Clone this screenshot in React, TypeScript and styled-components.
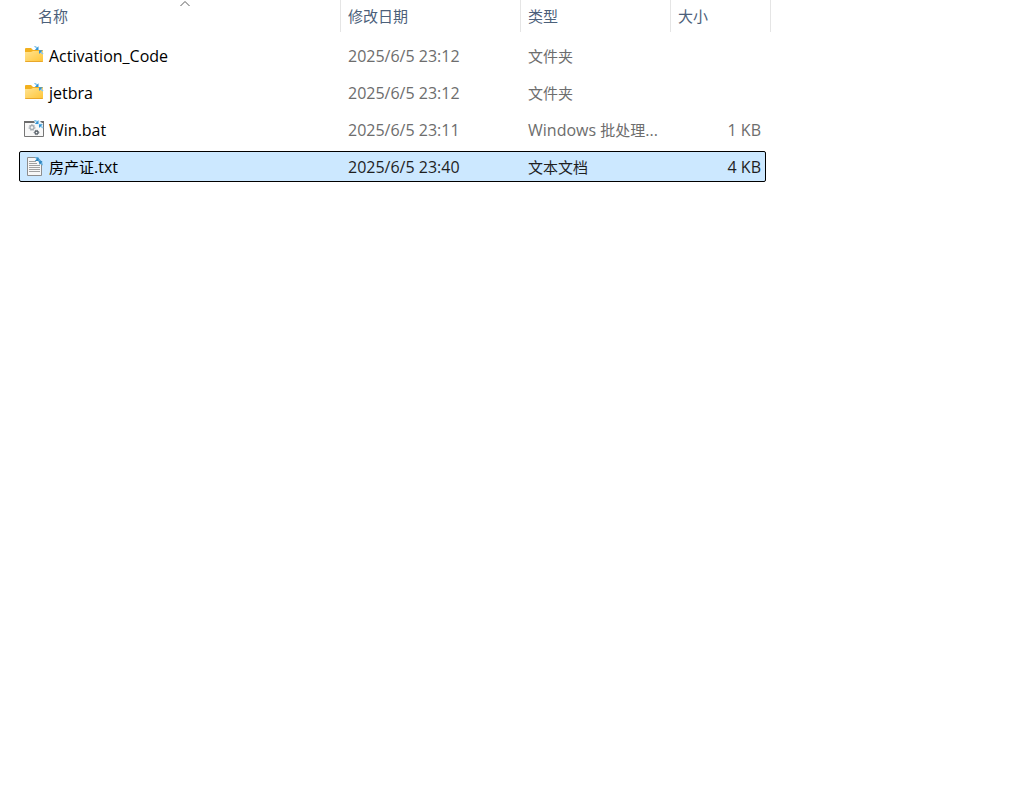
import React from "react";
import styled, { createGlobalStyle } from "styled-components";

const GlobalStyle = createGlobalStyle`
  *, *::before, *::after { box-sizing: border-box; }
  body {
    margin: 0;
    background: #ffffff;
    font-family: "Open Sans", "Noto Sans CJK SC", sans-serif;
    font-size: 16px;
    line-height: 30px;
  }
`;

const Files = styled.table`
  display: block;
  width: 100%;
  overflow: hidden;
`;

const Head = styled.thead`
  display: block;
`;

const HeadRow = styled.tr`
  display: grid;
  grid-template-columns: 311px 180px 150px 100px;
  height: 32px;
  padding-left: 30px;
`;

const HeadCell = styled.th`
  position: relative;
  padding: 0;
  border-right: 1px solid #e5e5e5;
  font-weight: 400;
`;

const SortButton = styled.button<{ $first?: boolean }>`
  width: 100%;
  height: 32px;
  padding: 0 0 0 ${(p) => (p.$first ? 8 : 7)}px;
  border: 0;
  background: transparent;
  color: #4c607a;
  font-family: "Noto Sans CJK SC", sans-serif;
  font-size: 15px;
  line-height: 32px;
  text-align: left;
`;

const SortArrow = styled.svg`
  position: absolute;
  top: 0;
  left: 50%;
  width: 10px;
  height: 7px;
  margin-left: -5px;
`;

const Body = styled.tbody`
  display: flex;
  flex-direction: column;
  gap: 6px;
  padding: 8px 0 0 19px;
`;

const Row = styled.tr<{ $selected: boolean }>`
  display: grid;
  grid-template-columns: 321px 180px 150px 94px;
  align-items: center;
  width: 747px;
  height: 31px;
  border: 1px solid ${(p) => (p.$selected ? "#000000" : "transparent")};
  border-radius: 2px;
  background: ${(p) => (p.$selected ? "#cce8ff" : "transparent")};
  color: ${(p) => (p.$selected ? "#1f1f1f" : "#6d6d6d")};
`;

const Cell = styled.td<{ $end?: boolean }>`
  padding: 0 ${(p) => (p.$end ? 4 : 0)}px 0 7px;
  text-align: ${(p) => (p.$end ? "right" : "left")};
  white-space: nowrap;
`;

const NameCell = styled(Cell)`
  display: flex;
  gap: 5px;
  padding: 0 0 0 4px;
  color: #000000;
`;

const Icon = styled.svg`
  flex: none;
  width: 20px;
  height: 20px;
  margin-top: 5px;
`;

const Han = styled.span`
  font-family: "Noto Sans CJK SC", sans-serif;
  font-size: 15px;
`;

const Arrows = () => (
  <g>
    <path d="M10.500 0l3 2.500M19 8l-3-2.500" fill="none" stroke="#8cc9ee" strokeWidth="1.600" />
    <path d="M14.500 .3v3.700h-3.700z" fill="#3394d4" />
    <path d="M15 4.200h3.800L15 8z" fill="#3394d4" />
  </g>
);

const FolderIcon = () => (
  <Icon viewBox="0 0 20 20" aria-hidden="true">
    <defs>
      <linearGradient id="folder" x1="0" y1="0" x2="1" y2="1">
        <stop offset="0" stopColor="#ffe391" />
        <stop offset="1" stopColor="#ffc536" />
      </linearGradient>
    </defs>
    <path d="M1 3q0-1 1-1h5l2 2h9q1 0 1 1v4H1z" fill="#f2b01e" />
    <path d="M1 6h6l2-1h10v10q0 1-1 1H2q-1 0-1-1z" fill="url(#folder)" />
    <path d="M1 15h18q0 1-1 1H2q-1 0-1-1z" fill="#e9a72a" />
    <Arrows />
  </Icon>
);

const BatchIcon = () => (
  <Icon viewBox="0 0 20 20" aria-hidden="true">
    <path d="M.5 1.500h19v15H.5z" fill="#f8f8f8" stroke="#767676" />
    <path d="M0 1h20v2H0z" fill="#6c6c6c" />
    <circle cx="8" cy="7.500" r="2" fill="none" stroke="#a3abb2" strokeWidth="1.300" />
    <circle cx="8" cy="7.500" r="3" fill="none" stroke="#a3abb2" strokeWidth="1" strokeDasharray="1.300 1.300" />
    <circle cx="12.500" cy="12.500" r="1.500" fill="none" stroke="#59626a" strokeWidth="1.300" />
    <circle cx="12.500" cy="12.500" r="2.300" fill="none" stroke="#59626a" strokeWidth="1" strokeDasharray="1 1" />
    <path d="M10 0h5l4 4v4h-2l-6-4z" fill="#e6f2fa" />
    <Arrows />
  </Icon>
);

const TextIcon = () => (
  <Icon viewBox="0 0 20 20" aria-hidden="true">
    <path d="M3.500.5h10l4 4v14h-14z" fill="#f7f7f7" stroke="#8d8d8d" />
    <path d="M5 4.500h7M5 6.500h8M5 8.500h11M5 10.500h11M5 12.500h11M5 14.500h11" stroke="#a0a0a0" />
    <path d="M10.500 0h3l4.500 4.500 1 4-3-1.500-2-3z" fill="#62afe0" />
    <path d="M14.500 .3v3.700h-3.700zM15 4.200h3.500L15.500 7.700z" fill="#2b83bd" />
  </Icon>
);

const icons = { folder: FolderIcon, batch: BatchIcon, text: TextIcon };

type FileItem = {
  icon: keyof typeof icons;
  name: string;
  date: string;
  type: string;
  size?: string;
  selected?: boolean;
};

const files: FileItem[] = [
  { icon: "folder", name: "Activation_Code", date: "2025/6/5 23:12", type: "文件夹" },
  { icon: "folder", name: "jetbra", date: "2025/6/5 23:12", type: "文件夹" },
  { icon: "batch", name: "Win.bat", date: "2025/6/5 23:11", type: "Windows 批处理...", size: "1 KB" },
  { icon: "text", name: "房产证.txt", date: "2025/6/5 23:40", type: "文本文档", size: "4 KB", selected: true },
];

const columns = ["名称", "修改日期", "类型", "大小"];

// Chinese runs are set one size smaller than the Latin text beside them.
const Mixed = ({ text }: { text: string }) => (
  <span>
    {text.split(/([\u4e00-\u9fff]+)/).map((part, i) =>
      i % 2 ? <Han key={i}>{part}</Han> : part
    )}
  </span>
);

export default function App() {
  return (
    <main lang="zh-CN">
      <GlobalStyle />
      <Files>
        <Head>
          <HeadRow>
            {columns.map((label, i) => (
              <HeadCell key={label} scope="col" aria-sort={i === 0 ? "ascending" : undefined}>
                {i === 0 && (
                  <SortArrow viewBox="0 0 10 7" aria-hidden="true">
                    <path d="M.5 6L5 1.500 9.500 6" fill="none" stroke="#5c5c5c" />
                  </SortArrow>
                )}
                <SortButton type="button" $first={i === 0}>{label}</SortButton>
              </HeadCell>
            ))}
          </HeadRow>
        </Head>
        <Body>
          {files.map((file) => {
            const FileIcon = icons[file.icon];
            return (
              <Row key={file.name} $selected={!!file.selected} aria-selected={!!file.selected}>
                <NameCell>
                  <FileIcon />
                  <Mixed text={file.name} />
                </NameCell>
                <Cell>{file.date}</Cell>
                <Cell><Mixed text={file.type} /></Cell>
                <Cell $end>{file.size}</Cell>
              </Row>
            );
          })}
        </Body>
      </Files>
    </main>
  );
}
